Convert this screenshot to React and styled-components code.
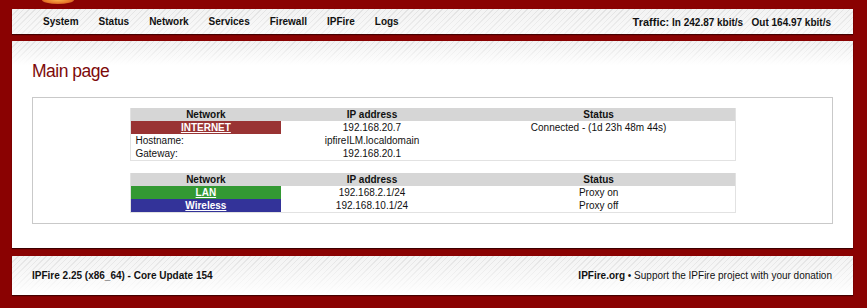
import React from "react";
import styled, { createGlobalStyle } from "styled-components";

const GlobalStyle = createGlobalStyle`
  html, body {
    margin: 0;
    padding: 0;
    background: #8a0202;
    font-family: "Liberation Sans", Arial, sans-serif;
    font-size: 10px;
    color: #111;
  }
`;

// stripes used by nav, panel header and footer
const stripes = `repeating-linear-gradient(135deg, #e2e2e2 0 1px, #f3f3f3 1px 4px)`;

const Page = styled.div`
  width: 867px;
  height: 308px;
  display: flex;
  flex-direction: column;
  padding: 0 14px 0 12px;
  box-sizing: border-box;
  overflow: hidden;
`;

const TopStrip = styled.div`
  height: 9px;
  display: flex;
  padding-left: 30px;
`;

const LogoTail = styled.div`
  width: 32px;
  height: 4px;
  border-radius: 0 0 16px 16px / 0 0 4px 4px;
  background: radial-gradient(ellipse at 50% 0, #f7b04a 0, #e8772a 55%, #b9441a 100%);
`;

const Bar = styled.div`
  background: linear-gradient(to bottom, rgba(255, 255, 255, 0) 0, rgba(255, 255, 255, 0.55) 100%),
    ${stripes};
  box-shadow: 0 1px 1px rgba(40, 0, 0, 0.7);
`;

const Nav = styled(Bar)`
  height: 25px;
  display: flex;
  align-items: center;
  justify-content: space-between;
  padding: 0 22px 0 21px;
`;

const NavList = styled.div`
  display: flex;
`;

const NavItem = styled.a`
  font-weight: bold;
  font-size: 10px;
  color: #111;
  padding: 0 10px;
  text-decoration: none;
`;

const Traffic = styled.div`
  font-weight: bold;
  font-size: 10px;
  color: #111;
  white-space: pre;
`;

const TrafficLabel = styled.span`
  font-size: 11px;
`;

const Main = styled.div`
  margin-top: 7px;
  height: 207px;
  box-sizing: border-box;
  padding: 20px 20px 0 20px;
  background: linear-gradient(to bottom, rgba(255, 255, 255, 0) 0, #fff 24px),
    ${stripes};
  box-shadow: 0 1px 1px rgba(40, 0, 0, 0.8);
`;

const Title = styled.h1`
  margin: 0;
  font-size: 17.5px;
  font-weight: normal;
  letter-spacing: -0.5px;
  color: #7d0a0a;
  line-height: 20px;
`;

const Box = styled.div`
  margin-top: 16px;
  border: 1px solid #c9c9c9;
  background: #fff;
  padding: 10px 0 10px;
  display: flex;
  flex-direction: column;
  align-items: center;
  gap: 12px;
`;

const Table = styled.table`
  width: 606px;
  border-collapse: collapse;
  table-layout: fixed;
  border: 1px solid #e2e2e2;
  border-top: none;
  font-size: 10px;
`;

const Th = styled.th`
  background: #d6d6d6;
  font-weight: bold;
  height: 13px;
  line-height: 13px;
  padding: 0;
  text-align: center;
  color: #111;
`;

const Td = styled.td`
  height: 13px;
  line-height: 13px;
  padding: 0 ${(p) => (p.$left ? "5px" : "0")};
  text-align: ${(p) => (p.$left ? "left" : "center")};
  background: ${(p) => p.$bg || "transparent"};
  color: #111;
`;

const IfaceLink = styled.a`
  color: #fff;
  font-weight: bold;
  text-decoration: underline;
`;

const Footer = styled(Bar)`
  margin-top: 8px;
  height: 39px;
  display: flex;
  align-items: center;
  justify-content: space-between;
  padding: 0 21px 0 20px;
  background: linear-gradient(to bottom, rgba(255, 255, 255, 0) 0, #fff 100%),
    ${stripes};
`;

const Version = styled.div`
  font-weight: bold;
`;

const Support = styled.div`
  color: #111;
  b { font-weight: bold; }
`;

const navItems = ["System", "Status", "Network", "Services", "Firewall", "IPFire", "Logs"];

const Columns = () => (
  <>
    <colgroup>
      <col style={{ width: "25%" }} />
      <col style={{ width: "30%" }} />
      <col style={{ width: "45%" }} />
    </colgroup>
    <thead>
      <tr>
        <Th>Network</Th>
        <Th>IP address</Th>
        <Th>Status</Th>
      </tr>
    </thead>
  </>
);

const App = () => {
  return (
    <>
      <GlobalStyle />
      <Page>
        <TopStrip>
          <LogoTail />
        </TopStrip>
        <Nav>
          <NavList>
            {navItems.map((n) => (
              <NavItem key={n}>{n}</NavItem>
            ))}
          </NavList>
          <Traffic>
            <TrafficLabel>Traffic:</TrafficLabel> In 242.87 kbit/s   Out 164.97 kbit/s
          </Traffic>
        </Nav>
        <Main>
          <Title>Main page</Title>
          <Box>
            <Table>
              <Columns />
              <tbody>
                <tr>
                  <Td $bg="#993333">
                    <IfaceLink>INTERNET</IfaceLink>
                  </Td>
                  <Td>192.168.20.7</Td>
                  <Td>Connected - (1d 23h 48m 44s)</Td>
                </tr>
                <tr>
                  <Td $left>Hostname:</Td>
                  <Td>ipfireILM.localdomain</Td>
                  <Td />
                </tr>
                <tr>
                  <Td $left>Gateway:</Td>
                  <Td>192.168.20.1</Td>
                  <Td />
                </tr>
              </tbody>
            </Table>
            <Table>
              <Columns />
              <tbody>
                <tr>
                  <Td $bg="#339933">
                    <IfaceLink>LAN</IfaceLink>
                  </Td>
                  <Td>192.168.2.1/24</Td>
                  <Td>Proxy on</Td>
                </tr>
                <tr>
                  <Td $bg="#333399">
                    <IfaceLink>Wireless</IfaceLink>
                  </Td>
                  <Td>192.168.10.1/24</Td>
                  <Td>Proxy off</Td>
                </tr>
              </tbody>
            </Table>
          </Box>
        </Main>
        <Footer>
          <Version>IPFire 2.25 (x86_64) - Core Update 154</Version>
          <Support>
            <b>IPFire.org</b> • Support the IPFire project with your donation
          </Support>
        </Footer>
      </Page>
    </>
  );
};

export default App;
